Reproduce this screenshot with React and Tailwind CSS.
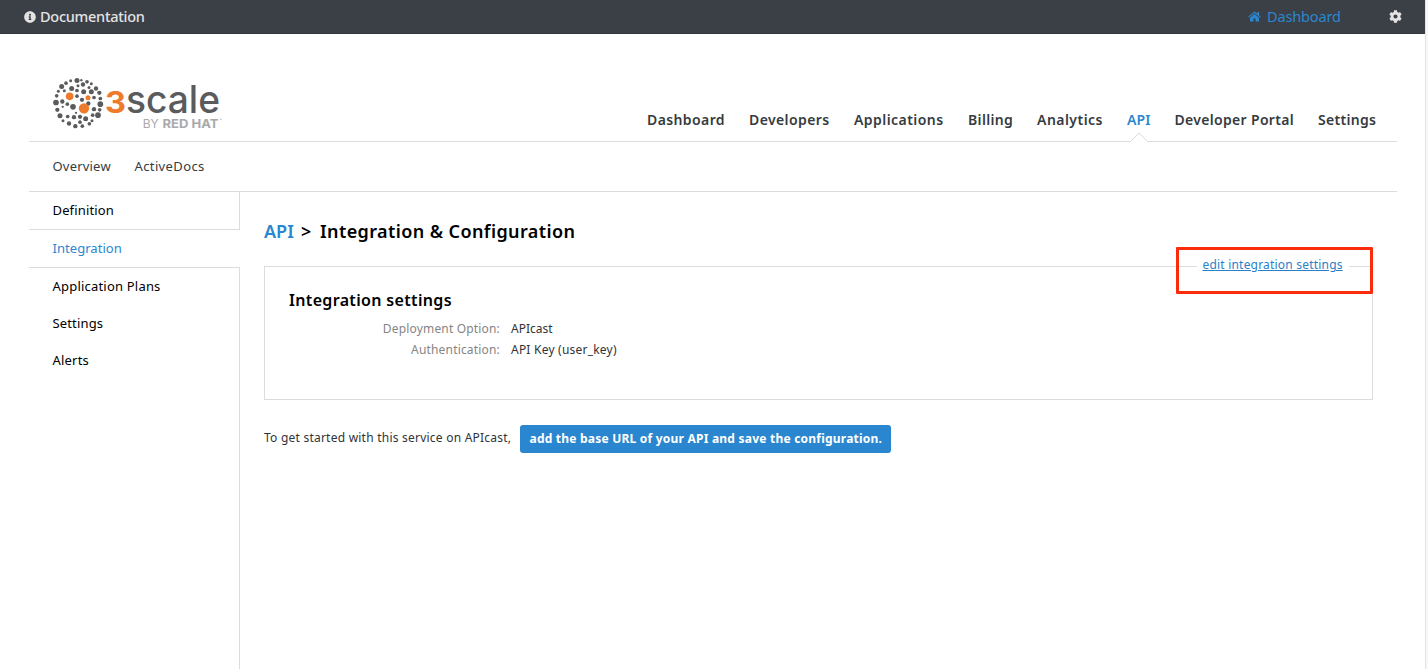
import { FaInfoCircle, FaCog } from "react-icons/fa";

const GRAY_DOTS = [
  [230, 241, 7], [211, 242, 4], [243, 240, 3], [197, 249, 5], [260, 245, 5], [184, 259, 7],
  [248, 253, 6], [273, 251, 4], [233, 257, 4], [214, 265, 7], [266, 262, 4], [287, 265, 6],
  [174, 273, 4], [192, 272, 4], [230, 271, 5], [250, 275, 7], [273, 275, 7], [297, 278, 6],
  [169, 287, 5], [230, 288, 5], [281, 292, 5], [300, 295, 5], [167, 307, 8], [186, 304, 6],
  [245, 299, 6], [201, 312, 5], [264, 310, 6], [300, 312, 8], [218, 320, 8], [187, 320, 3],
  [171, 329, 6], [281, 327, 6], [298, 329, 5], [227, 338, 3], [179, 347, 7], [202, 349, 5],
  [221, 351, 6], [239, 350, 6], [277, 345, 5], [293, 345, 8], [256, 356, 7], [188, 362, 4],
  [206, 370, 6], [225, 378, 6], [239, 366, 5], [246, 378, 5], [267, 371, 5], [275, 362, 4],
];

const NAV = [
  { label: "Dashboard", cls: "w-[78px] tracking-[0.4px]" },
  { label: "Developers", cls: "w-[81px] tracking-[0.4px]" },
  { label: "Applications", cls: "w-[90px] tracking-[0.45px]" },
  { label: "Billing", cls: "w-[45px] tracking-[0.35px]" },
  { label: "Analytics", cls: "w-[66px] tracking-[0.47px]" },
  { label: "API", cls: "w-[23.5px] tracking-[0.1px] text-[#2a87cf]", active: true },
  { label: "Developer Portal", cls: "w-[119.5px] tracking-[0.32px]" },
  { label: "Settings", cls: "w-[58px] tracking-[0.3px]" },
];

function Logo() {
  return (
    <svg className="block h-[64px] w-[182px]" viewBox="0 0 182 64">
      <g transform="translate(-40 -70) scale(0.33333)">
        {GRAY_DOTS.map(([x, y, r], i) => (
          <circle key={i} cx={x + 1} cy={y + 0.5} r={r + 0.5} fill="#5a5b5d" />
        ))}
        <circle cx="209" cy="289" r="11.5" fill="#ee7a2b" />
        <circle cx="264" cy="293" r="7.5" fill="#ee7a2b" />
        <circle cx="252" cy="325" r="15.5" fill="#ee7a2b" />
      </g>
      <text x="65" y="43.4" fontFamily="Inter, sans-serif" fontSize="29.5" fontWeight="700" fill="#ee7a2b" textLength="21" lengthAdjust="spacingAndGlyphs">3</text>
      <text x="86" y="43.4" fontFamily="Inter, sans-serif" fontSize="38" fontWeight="500" fill="#5a5b5d" textLength="94" lengthAdjust="spacingAndGlyphs">scale</text>
      <text x="102.7" y="58" fontFamily="Inter, sans-serif" fontSize="12" fill="#a9a9ab" textLength="16" lengthAdjust="spacingAndGlyphs">BY</text>
      <text x="122.5" y="58" fontFamily="Inter, sans-serif" fontSize="12" fontWeight="700" fill="#a9a9ab" textLength="56" lengthAdjust="spacingAndGlyphs">RED HAT</text>
      <circle cx="180.8" cy="49.3" r="0.8" fill="#b5b5b7" />
    </svg>
  );
}

function HomeIcon() {
  return (
    <svg className="h-[11px] w-[13px]" viewBox="0 0 13 11" fill="currentColor">
      <path d="M6.5 0.4 L9.3 2.8 V1 H11 V4.2 L12.8 5.8 L12.1 6.6 L6.5 1.9 L0.9 6.6 L0.2 5.8 Z" />
      <path d="M6.5 2.9 L11 6.7 V10.6 H7.6 V7.6 H5.4 V10.6 H2 V6.7 Z" />
    </svg>
  );
}

function TopBar() {
  return (
    <div className="flex h-[34px] items-center border-b border-[#33373c] bg-[#3b3f46] pl-[24px] pr-[23px]">
      <FaInfoCircle className="size-[12px] text-[#e3e3e3]" />
      <span className="-mt-[2px] ml-[4px] text-[14.5px] font-medium leading-5 tracking-[-0.27px] text-[#e3e3e3]">Documentation</span>
      <div className="ml-auto flex items-center text-[#2a87cf]">
        <HomeIcon />
        <span className="-mt-[2px] ml-[6px] w-[76px] text-[14.5px] leading-5 tracking-[-0.15px]">Dashboard</span>
        <FaCog className="ml-[46px] size-[13px] text-[#e3e3e3]" />
      </div>
    </div>
  );
}

function Header() {
  return (
    <header className="flex h-[108px] items-start border-b border-[#dcdcdc] pl-[11px] pr-[21px] pt-[36px]">
      <Logo />
      <nav className="ml-auto flex gap-6 pt-[40px] text-[14px] font-semibold leading-5 text-[#363b40]">
        {NAV.map((n) => (
          <div key={n.label} className={"relative whitespace-nowrap " + n.cls}>
            {n.label}
            {n.active && (
              <svg className="absolute left-[3px] top-[22px]" width="18" height="11" viewBox="0 0 18 11">
                <path d="M0.5 9.5 L9 1 L17.5 9.5 V11 H0.5 Z" fill="#fff" />
                <path d="M0.5 9.5 L9 1 L17.5 9.5" fill="none" stroke="#dcdcdc" />
              </svg>
            )}
          </div>
        ))}
      </nav>
    </header>
  );
}

function Sidebar() {
  return (
    <aside className="flex w-[211px] shrink-0 flex-col text-[13px] leading-[37px] text-black">
      <div className="h-[38px] border-b border-r border-[#dcdcdc] pl-[23.5px] tracking-[0.15px]">Definition</div>
      <div className="h-[38px] border-b border-[#dcdcdc] pl-[23.5px] tracking-[0.05px] text-[#2a87cf]">Integration</div>
      <div className="flex-1 border-r border-[#dcdcdc] pl-[23.5px]">
        <div className="tracking-[0.2px]">Application Plans</div>
        <div className="tracking-[0.15px]">Settings</div>
        <div className="tracking-[0.2px]">Alerts</div>
      </div>
    </aside>
  );
}

function Content() {
  return (
    <main className="flex-1 pl-[24px] pr-[24px] pt-[26px]">
      <h1 className="flex text-[18px] font-semibold leading-[26px] text-black">
        <span className="w-[37px] text-[#2a87cf]">API</span>
        <span className="w-[19px]">&gt;</span>
        <span className="whitespace-nowrap tracking-[0.4px]">Integration &amp; Configuration</span>
      </h1>
      <section className="relative mt-[22px] h-[134px] border border-[#dcdcdc] pl-[24px] pt-[21px]">
        <h2 className="text-[16px] font-semibold leading-6 tracking-[0.34px] text-black">Integration settings</h2>
        <dl className="mt-[6px] grid grid-cols-[211px_1fr] gap-x-[11px] text-[12px] leading-[21px]">
          <dt className="text-right tracking-[0.17px] text-[#858585]">Deployment Option:</dt>
          <dd className="text-[#303438]">APIcast</dd>
          <dt className="text-right tracking-[0.18px] text-[#858585]">Authentication:</dt>
          <dd className="tracking-[0.22px] text-[#303438]">API Key (user_key)</dd>
        </dl>
        <a className="absolute right-[23px] top-[-12px] w-[152px] whitespace-nowrap bg-white pl-[5.5px] text-[12px] leading-5 tracking-[0.2px] text-[#2a80c8] underline underline-offset-1">
          edit integration settings
        </a>
        <div className="absolute right-[-1px] top-[-20px] h-[47px] w-[197px] rounded-[1px] border-[3px] border-[#fb2c0b]" />
      </section>
      <div className="mt-[25px] flex h-[28px] text-[12px] text-[#303438]">
        <span className="w-[256px] whitespace-nowrap leading-[25px] tracking-[0.23px]">To get started with this service on APIcast,</span>
        <div className="h-[28px] w-[371px] whitespace-nowrap rounded-[3px] bg-[#2a87cf] pl-[9.5px] pt-px font-bold leading-[26px] tracking-[0.22px] text-white">
          add the base URL of your API and save the configuration.
        </div>
      </div>
    </main>
  );
}

export default function App() {
  return (
    <div className="flex h-[669px] overflow-hidden bg-[#f8f8f8] font-['Noto_Sans','Open_Sans',sans-serif]">
      <div className="flex w-[1425px] flex-col bg-white">
        <TopBar />
        <div className="ml-[29px] mr-[28px] flex flex-1 flex-col">
          <Header />
          <div className="flex h-[50px] border-b border-[#dcdcdc] pl-[23.5px] text-[13px] leading-[49px] text-[#363b40]">
            <span className="w-[82px] tracking-[0.2px]">Overview</span>
            <span className="tracking-[0.38px]">ActiveDocs</span>
          </div>
          <div className="flex flex-1">
            <Sidebar />
            <Content />
          </div>
        </div>
      </div>
      <div className="w-[3px] border-l border-[#e4e4e4]" />
    </div>
  );
}
